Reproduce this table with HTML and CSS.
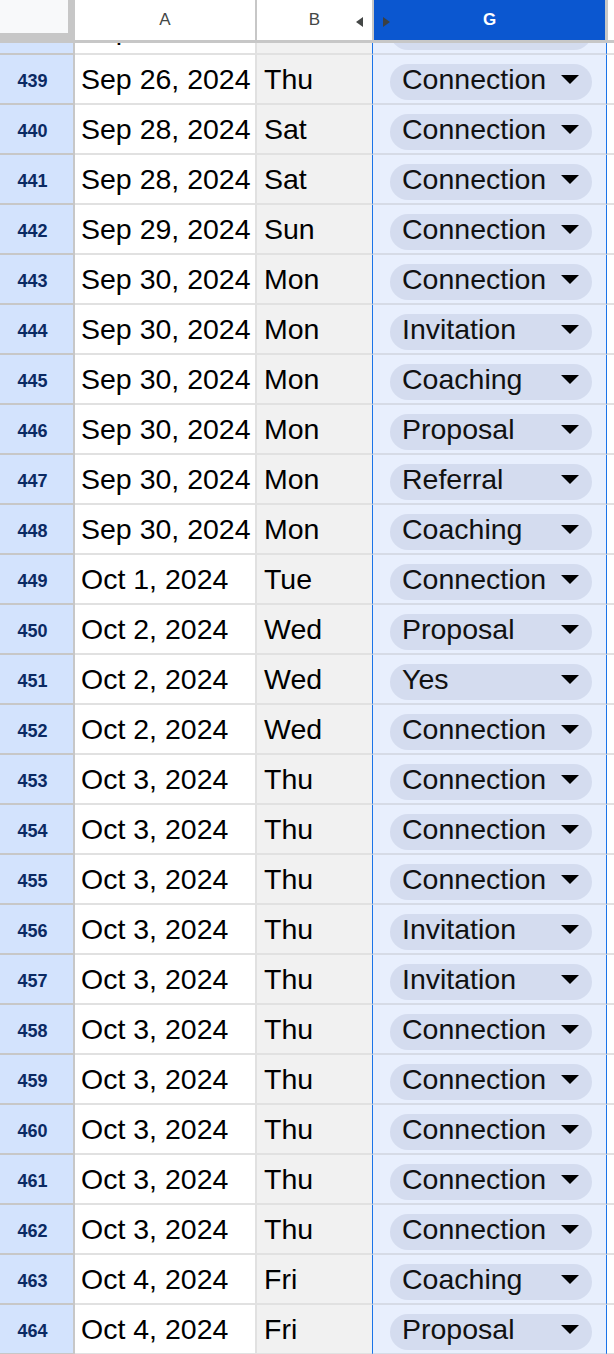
FILE: index.html
```html
<html>

<head>
  <link rel="stylesheet" href="styles.css">
</head>

<body>
  <div id="sheet">

    <div class="head">
      <div class="head-corner">
        <div class="head-corner-fill"></div>
      </div>
      <div class="head-cell head-a">A</div>
      <div class="head-cell head-b">B<span class="arrow-left"></span></div>
      <div class="head-cell head-g"><span class="arrow-right"></span>G</div>
      <div class="head-cell head-rest"></div>
    </div>

    <div class="grid">
      <div class="rows">
        <div class="row"><div class="num">438</div><div class="date">Sep 26, 2024</div><div class="day">Thu</div><div class="type"><div class="chip"><span>Connection</span><i></i></div></div><div class="rest"></div></div>
        <div class="row"><div class="num">439</div><div class="date">Sep 26, 2024</div><div class="day">Thu</div><div class="type"><div class="chip"><span>Connection</span><i></i></div></div><div class="rest"></div></div>
        <div class="row"><div class="num">440</div><div class="date">Sep 28, 2024</div><div class="day">Sat</div><div class="type"><div class="chip"><span>Connection</span><i></i></div></div><div class="rest"></div></div>
        <div class="row"><div class="num">441</div><div class="date">Sep 28, 2024</div><div class="day">Sat</div><div class="type"><div class="chip"><span>Connection</span><i></i></div></div><div class="rest"></div></div>
        <div class="row"><div class="num">442</div><div class="date">Sep 29, 2024</div><div class="day">Sun</div><div class="type"><div class="chip"><span>Connection</span><i></i></div></div><div class="rest"></div></div>
        <div class="row"><div class="num">443</div><div class="date">Sep 30, 2024</div><div class="day">Mon</div><div class="type"><div class="chip"><span>Connection</span><i></i></div></div><div class="rest"></div></div>
        <div class="row"><div class="num">444</div><div class="date">Sep 30, 2024</div><div class="day">Mon</div><div class="type"><div class="chip"><span>Invitation</span><i></i></div></div><div class="rest"></div></div>
        <div class="row"><div class="num">445</div><div class="date">Sep 30, 2024</div><div class="day">Mon</div><div class="type"><div class="chip"><span>Coaching</span><i></i></div></div><div class="rest"></div></div>
        <div class="row"><div class="num">446</div><div class="date">Sep 30, 2024</div><div class="day">Mon</div><div class="type"><div class="chip"><span>Proposal</span><i></i></div></div><div class="rest"></div></div>
        <div class="row"><div class="num">447</div><div class="date">Sep 30, 2024</div><div class="day">Mon</div><div class="type"><div class="chip"><span>Referral</span><i></i></div></div><div class="rest"></div></div>
        <div class="row"><div class="num">448</div><div class="date">Sep 30, 2024</div><div class="day">Mon</div><div class="type"><div class="chip"><span>Coaching</span><i></i></div></div><div class="rest"></div></div>
        <div class="row"><div class="num">449</div><div class="date">Oct 1, 2024</div><div class="day">Tue</div><div class="type"><div class="chip"><span>Connection</span><i></i></div></div><div class="rest"></div></div>
        <div class="row"><div class="num">450</div><div class="date">Oct 2, 2024</div><div class="day">Wed</div><div class="type"><div class="chip"><span>Proposal</span><i></i></div></div><div class="rest"></div></div>
        <div class="row"><div class="num">451</div><div class="date">Oct 2, 2024</div><div class="day">Wed</div><div class="type"><div class="chip"><span>Yes</span><i></i></div></div><div class="rest"></div></div>
        <div class="row"><div class="num">452</div><div class="date">Oct 2, 2024</div><div class="day">Wed</div><div class="type"><div class="chip"><span>Connection</span><i></i></div></div><div class="rest"></div></div>
        <div class="row"><div class="num">453</div><div class="date">Oct 3, 2024</div><div class="day">Thu</div><div class="type"><div class="chip"><span>Connection</span><i></i></div></div><div class="rest"></div></div>
        <div class="row"><div class="num">454</div><div class="date">Oct 3, 2024</div><div class="day">Thu</div><div class="type"><div class="chip"><span>Connection</span><i></i></div></div><div class="rest"></div></div>
        <div class="row"><div class="num">455</div><div class="date">Oct 3, 2024</div><div class="day">Thu</div><div class="type"><div class="chip"><span>Connection</span><i></i></div></div><div class="rest"></div></div>
        <div class="row"><div class="num">456</div><div class="date">Oct 3, 2024</div><div class="day">Thu</div><div class="type"><div class="chip"><span>Invitation</span><i></i></div></div><div class="rest"></div></div>
        <div class="row"><div class="num">457</div><div class="date">Oct 3, 2024</div><div class="day">Thu</div><div class="type"><div class="chip"><span>Invitation</span><i></i></div></div><div class="rest"></div></div>
        <div class="row"><div class="num">458</div><div class="date">Oct 3, 2024</div><div class="day">Thu</div><div class="type"><div class="chip"><span>Connection</span><i></i></div></div><div class="rest"></div></div>
        <div class="row"><div class="num">459</div><div class="date">Oct 3, 2024</div><div class="day">Thu</div><div class="type"><div class="chip"><span>Connection</span><i></i></div></div><div class="rest"></div></div>
        <div class="row"><div class="num">460</div><div class="date">Oct 3, 2024</div><div class="day">Thu</div><div class="type"><div class="chip"><span>Connection</span><i></i></div></div><div class="rest"></div></div>
        <div class="row"><div class="num">461</div><div class="date">Oct 3, 2024</div><div class="day">Thu</div><div class="type"><div class="chip"><span>Connection</span><i></i></div></div><div class="rest"></div></div>
        <div class="row"><div class="num">462</div><div class="date">Oct 3, 2024</div><div class="day">Thu</div><div class="type"><div class="chip"><span>Connection</span><i></i></div></div><div class="rest"></div></div>
        <div class="row"><div class="num">463</div><div class="date">Oct 4, 2024</div><div class="day">Fri</div><div class="type"><div class="chip"><span>Coaching</span><i></i></div></div><div class="rest"></div></div>
        <div class="row"><div class="num">464</div><div class="date">Oct 4, 2024</div><div class="day">Fri</div><div class="type"><div class="chip"><span>Proposal</span><i></i></div></div><div class="rest"></div></div>
      </div>
    </div>

  </div>
</body>

</html>
```

FILE: styles.css
```css
* {
  margin: 0;
  padding: 0;
  box-sizing: border-box;
}

body {
  font-family: "Liberation Sans", Arial, sans-serif;
  background: #fff;
  overflow: hidden;
}

#sheet {
  width: 614px;
  height: 1354px;
  overflow: hidden;
  display: flex;
  flex-direction: column;
}

/* column header row */

.head {
  display: flex;
  height: 43px;
  flex-shrink: 0;
  position: relative;
  z-index: 1;
  background: #fff;
}

.head-corner {
  width: 75px;
  height: 43px;
  background: #c7c7c7;
}

.head-corner-fill {
  width: 68px;
  height: 33px;
  background: #f8f9fa;
}

.head-cell {
  position: relative;
  display: flex;
  align-items: center;
  justify-content: center;
  height: 43px;
  border-bottom: 3px solid #c7c7c7;
  font-size: 17px;
  color: #444746;
}

.head-a {
  width: 182px;
  border-right: 2px solid #c7c7c7;
}

.head-b {
  width: 117px;
  border-right: 2px solid #c7c7c7;
}

.head-g {
  width: 234px;
  background: #0b57d0;
  border-right: 3px solid #c7c7c7;
  color: #fff;
  font-weight: 700;
}

.head-rest {
  flex-grow: 1;
}

/* hidden column markers */

.arrow-left {
  position: absolute;
  right: 9px;
  top: 17px;
  border-top: 5px solid transparent;
  border-bottom: 5px solid transparent;
  border-right: 7px solid #444746;
}

.arrow-right {
  position: absolute;
  left: 9px;
  top: 17px;
  border-top: 5px solid transparent;
  border-bottom: 5px solid transparent;
  border-left: 7px solid #3c4043;
}

/* rows */

.grid {
  flex-grow: 1;
  overflow: hidden;
}

.rows {
  margin-top: -38px;
}

.row {
  display: flex;
  height: 50px;
}

.row > div {
  display: flex;
  align-items: center;
  height: 50px;
  border-bottom: 2px solid #e1e1e1;
  font-size: 28.5px;
  color: #000;
  white-space: nowrap;
  overflow: hidden;
}

.row > .num {
  width: 75px;
  justify-content: center;
  padding: 5px 8px 0 0;
  background: #d3e3fd;
  border-right: 2px solid #c7c7c7;
  border-bottom-color: #c7c7c7;
  font-size: 18px;
  font-weight: 700;
  color: #0b2a63;
}

.row > .date {
  width: 182px;
  padding-left: 6px;
  border-right: 2px solid #e1e1e1;
}

.row > .day {
  width: 115px;
  padding-left: 7px;
  background: #f1f1f1;
}

.row > .type {
  width: 235px;
  padding-left: 17px;
  background: #e8effd;
  border-left: 1px solid #1a73e8;
  border-right: 1px solid #1a73e8;
  border-bottom-color: #d6dbe6;
}

.row > .rest {
  flex-grow: 1;
}

.chip {
  display: flex;
  align-items: center;
  justify-content: space-between;
  width: 202px;
  height: 36px;
  margin-top: 6px;
  padding: 0 13px 6px 12px;
  border-radius: 18px;
  background: #d4dcef;
  color: #111;
}

.chip i {
  border-left: 9px solid transparent;
  border-right: 9px solid transparent;
  border-top: 9px solid #000;
}
```
